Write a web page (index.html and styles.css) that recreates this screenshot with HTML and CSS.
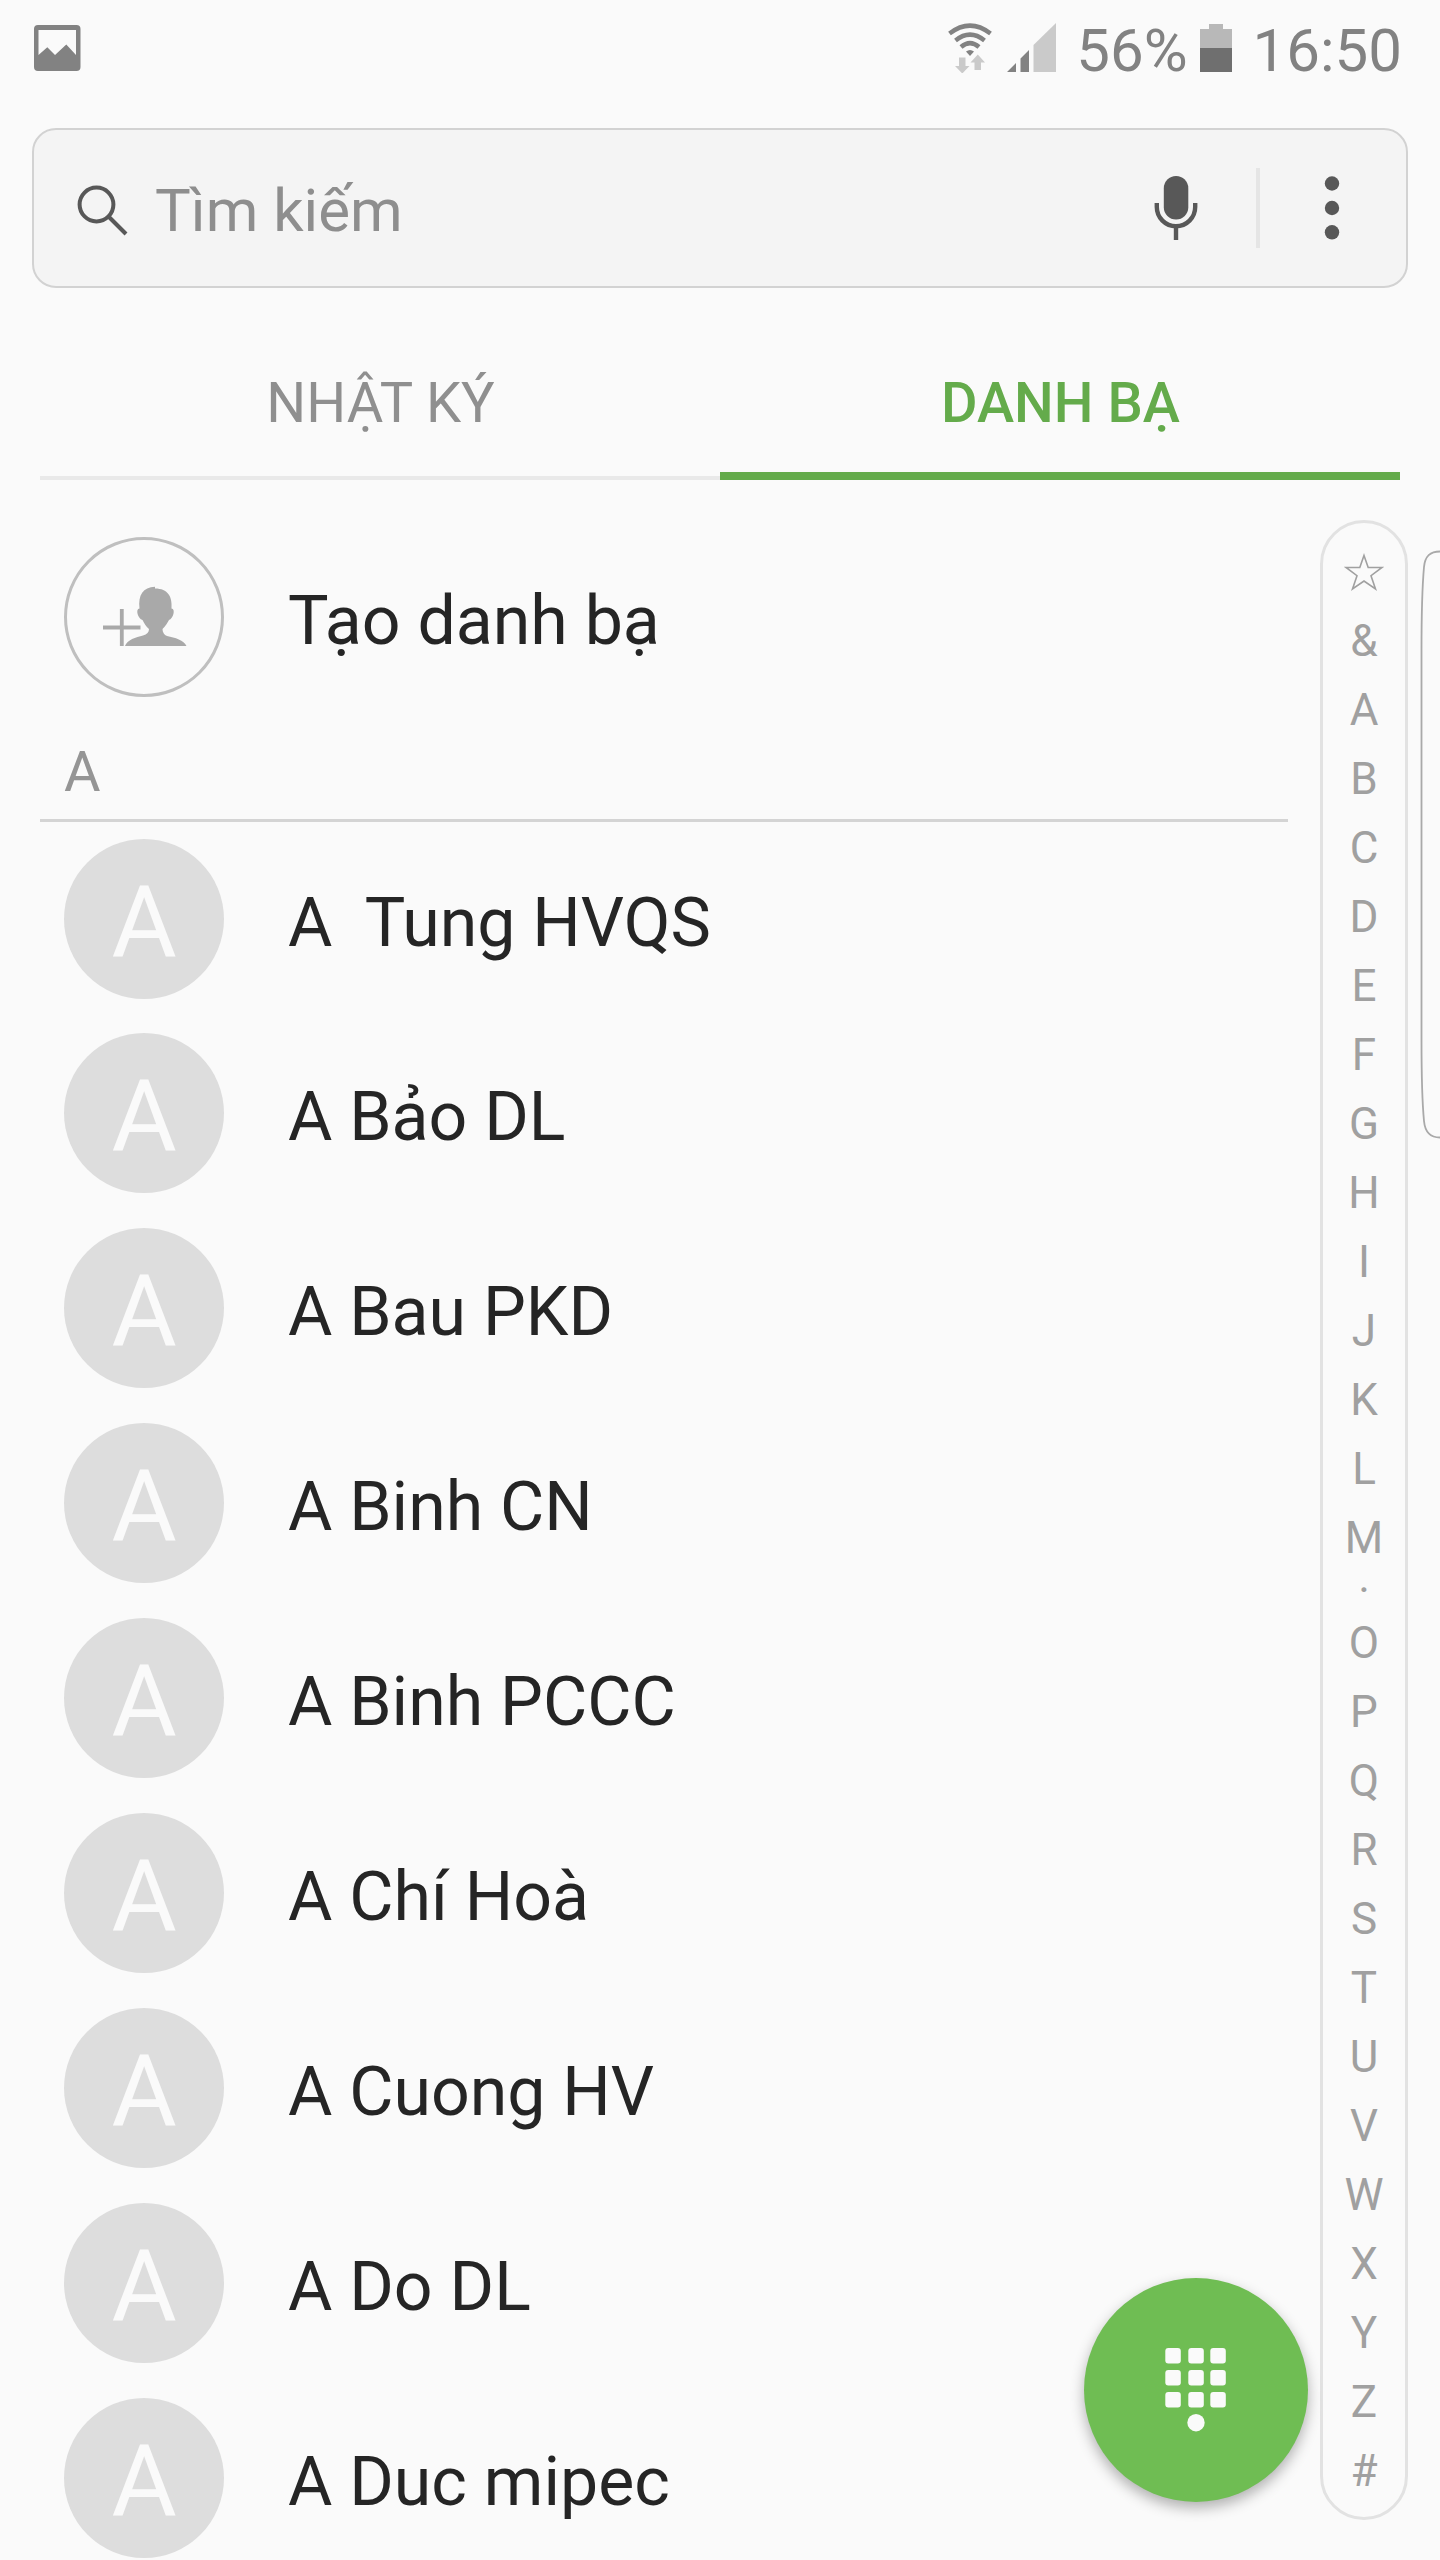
FILE: index.html
```html
<!DOCTYPE html>
<html lang="vi">
<head>
    <meta charset="UTF-8">
    <meta name="viewport" content="width=device-width, initial-scale=1.0">
    <title>Danh bạ</title>
    <link rel="stylesheet" href="styles.css">
</head>
<body>
    <header class="status-bar">
        <svg class="icon-photo" width="48" height="48" viewBox="0 0 48 48">
            <path fill="#828282" fill-rule="evenodd" d="M5 1H43.500Q47.500 1 47.500 5V43Q47.500 47 43.500 47H5Q1 47 1 43V5Q1 1 5 1ZM5.500 6V31L14.300 23.300L22 31L33.300 20.500L43 31V6Z"/>
        </svg>
        <div class="status-right">
            <svg class="icon-wifi" width="44" height="50" viewBox="0 0 44 50">
                <g fill="none" stroke="#828282" stroke-width="4.500">
                    <path d="M1.500 10.500Q22 -5.300 42.500 10.500"/>
                    <path d="M7.500 17.500Q22 5.800 36.500 17.500"/>
                    <path d="M13 24Q22 16.200 31 24"/>
                </g>
                <path fill="#828282" d="M18 28.500Q22 25.500 26 28.500L22 33Z"/>
                <path fill="#cacaca" d="M11 34.500H17.500V43H21.500L14.300 50.500L7 43H11ZM26.500 47V39.500H22.500L29.800 31.500L37 39.500H33V47Z"/>
            </svg>
            <svg class="icon-signal" width="49" height="49" viewBox="0 0 49 49">
                <path fill="#828282" d="M0 49L9 40V49ZM13.500 35.500L22 27V49H13.500Z"/>
                <path fill="#cacaca" d="M26.500 22L49 0V49H26.500Z"/>
            </svg>
            <span class="percent">56%</span>
            <svg class="icon-battery" width="32" height="48" viewBox="0 0 32 48">
                <path fill="#b8b8b8" d="M9 0H23V5H32V24H0V5H9Z"/>
                <path fill="#6f6f6f" d="M0 24H32V48H0Z"/>
            </svg>
            <span class="clock">16:50</span>
        </div>
    </header>

    <div class="search">
        <svg class="icon-search" width="52" height="52" viewBox="0 0 52 52" fill="none" stroke="#585858" stroke-width="4">
            <circle cx="19.500" cy="19.500" r="16.900"/>
            <path d="M31.500 31.500L49 49"/>
        </svg>
        <span class="search-hint">Tìm kiếm</span>
        <svg class="icon-mic" width="44" height="64" viewBox="0 0 44 64">
            <rect x="9.800" y="0" width="24.500" height="43.500" rx="12.200" fill="#585858"/>
            <path d="M2.800 27V31A19.200 19.200 0 0 0 41.200 31V27M22 51V64" fill="none" stroke="#585858" stroke-width="4.400"/>
        </svg>
        <div class="search-divider"></div>
        <svg class="icon-more" width="16" height="64" viewBox="0 0 16 64" fill="#585858">
            <circle cx="8" cy="7.500" r="7.200"/>
            <circle cx="8" cy="32" r="7.200"/>
            <circle cx="8" cy="56.300" r="7.200"/>
        </svg>
    </div>

    <nav class="tabs">
        <div class="tab">NHẬT KÝ</div>
        <div class="tab active">DANH BẠ</div>
    </nav>

    <main class="content">
        <div class="list">
            <div class="row">
                <div class="avatar add">
                    <svg width="86" height="62" viewBox="0 0 86 62">
                        <path d="M20.800 23V60M2 41.500H39.500" stroke="#a9a9a9" stroke-width="3.800"/>
                        <path fill="#a9a9a9" d="M24 60C26 54 35 51 42 49.500C46 48.500 48 46 48 43C45 40.500 43 37 41.500 34C37 33 34 23 38.500 22.500C37 9 42 1.500 54 0.800V2.500C67 2.500 71.500 11 70.500 22.500C75 23 72 33 68 34C66.500 37 64 40.500 61.500 43C61.500 46 63 49 66 50C74 51.500 83 54.500 85.500 60Z"/>
                    </svg>
                </div>
                <span class="name">Tạo danh bạ</span>
            </div>
            <div class="section">A</div>
            <div class="row"><div class="avatar">A</div><span class="name">A&nbsp; Tung HVQS</span></div>
            <div class="row"><div class="avatar">A</div><span class="name">A Bảo DL</span></div>
            <div class="row"><div class="avatar">A</div><span class="name">A Bau PKD</span></div>
            <div class="row"><div class="avatar">A</div><span class="name">A Binh CN</span></div>
            <div class="row"><div class="avatar">A</div><span class="name">A Binh PCCC</span></div>
            <div class="row"><div class="avatar">A</div><span class="name">A Chí Hoà</span></div>
            <div class="row"><div class="avatar">A</div><span class="name">A Cuong HV</span></div>
            <div class="row"><div class="avatar">A</div><span class="name">A Do DL</span></div>
            <div class="row"><div class="avatar">A</div><span class="name">A Duc mipec</span></div>
        </div>

        <div class="index">
            <span><svg width="40" height="40" viewBox="0 0 40 40" fill="none" stroke="#a0a0a0" stroke-width="1.600">
                <path d="M20 2.500L24.200 14.500H38L27 22.700L31.500 36L20 28L8.500 36L13 22.700L2 14.500H15.800Z"/>
            </svg></span>
            <span>&amp;</span>
            <span>A</span>
            <span>B</span>
            <span>C</span>
            <span>D</span>
            <span>E</span>
            <span>F</span>
            <span>G</span>
            <span>H</span>
            <span>I</span>
            <span>J</span>
            <span>K</span>
            <span>L</span>
            <span>M</span>
            <span class="dot">·</span>
            <span>O</span>
            <span>P</span>
            <span>Q</span>
            <span>R</span>
            <span>S</span>
            <span>T</span>
            <span>U</span>
            <span>V</span>
            <span>W</span>
            <span>X</span>
            <span>Y</span>
            <span>Z</span>
            <span>#</span>
        </div>
    </main>

    <!-- edge panel handle -->
    <svg class="edge-handle" width="20" height="590" viewBox="0 0 20 590" fill="none" stroke="#a9a9a9" stroke-width="1.800">
        <path d="M20 1.500C10 1.500 5 6 4 17Q1.500 45 1.500 100V490Q1.500 545 4 571C5 582 10 587.500 20 587.500"/>
    </svg>

    <button class="fab">
        <svg width="64" height="86" viewBox="0 0 64 86" fill="#fafafa">
            <rect x="1.300" y="1" width="15.500" height="15.500" rx="3"/>
            <rect x="24.300" y="1" width="15.500" height="15.500" rx="3"/>
            <rect x="46.300" y="1" width="15.500" height="15.500" rx="3"/>
            <rect x="1.300" y="23" width="15.500" height="15.500" rx="3"/>
            <rect x="24.300" y="23" width="15.500" height="15.500" rx="3"/>
            <rect x="46.300" y="23" width="15.500" height="15.500" rx="3"/>
            <rect x="1.300" y="45" width="15.500" height="15.500" rx="3"/>
            <rect x="24.300" y="45" width="15.500" height="15.500" rx="3"/>
            <rect x="46.300" y="45" width="15.500" height="15.500" rx="3"/>
            <circle cx="32" cy="75.700" r="8.700"/>
        </svg>
    </button>
</body>
</html>
```
FILE: styles.css
```css
*{margin:0;padding:0;box-sizing:border-box}
body{position:relative;width:1440px;height:2560px;overflow:hidden;background:#fafafa;font-family:Roboto,"Noto Sans",sans-serif;color:#252525}
svg{display:block;flex:none}

.status-bar{display:flex;justify-content:space-between;align-items:flex-start;height:128px;padding:24px 38px 0 33px;color:#828282;font-size:60px;line-height:53px}
.status-right{display:flex}
.icon-wifi{margin:-1px 15px 0 0}
.icon-signal{margin:-1px 20px 0 0}
.percent{margin-right:12px}
.icon-battery{margin-right:21px}

.search{display:flex;align-items:center;height:160px;margin:0 32px;padding:0 66px 0 43px;background:#f4f4f4;border:2px solid #d2d2d2;border-radius:24px}
.icon-search{margin-top:5px}
.search-hint{flex:1;margin-left:26px;padding-top:5px;font-size:60px;color:#8e8e8e}
.search-divider{width:4px;height:80px;margin:0 64px 0 58px;background:#e5e5e5}

.tabs{display:flex;height:192px;margin:0 40px}
.tab{width:50%;padding-top:82px;border-bottom:4px solid #e9e9e9;text-align:center;text-indent:1px;font-size:56px;line-height:66px;color:#8f8f8f}
.tab.active{border-bottom:8px solid #64ab4b;color:#64ab4b;font-weight:500}

.content{display:flex;justify-content:space-between;padding:40px 32px 0 40px}
.list{width:1248px}
.row{display:flex;align-items:flex-start;height:195px;padding:17px 0 0 24px}
.row:first-child,.section + .row{height:194px}
.avatar{display:flex;justify-content:center;align-items:center;width:160px;height:160px;padding-top:7px;border-radius:50%;background:#ddd;color:#fafafa;font-size:100px}
.avatar.add{border:3px solid #bfbfbf;background:none;padding:0}
.name{margin-left:64px;padding-top:4px;font-size:68px;line-height:160px;white-space:pre}
.section{height:108px;padding:25px 0 0 24px;border-bottom:3px solid #d4d4d4;font-size:56px;line-height:66px;color:#959595}

.index{display:flex;flex-direction:column;width:88px;height:2000px;padding-top:15px;border:3px solid #e2e2e2;border-radius:44px;font-size:44px;line-height:69px;text-align:center;color:#a0a0a0}
.index span{display:flex;justify-content:center;align-items:center;height:69px;flex:none}
.index .dot{height:36px;line-height:36px}

.edge-handle{position:absolute;top:550px;right:0}
.fab{position:absolute;left:1084px;top:2278px;display:flex;justify-content:center;align-items:center;width:224px;height:224px;border:none;border-radius:50%;background:#6fbd53;box-shadow:0 6px 14px rgba(0,0,0,0.3)}
```
